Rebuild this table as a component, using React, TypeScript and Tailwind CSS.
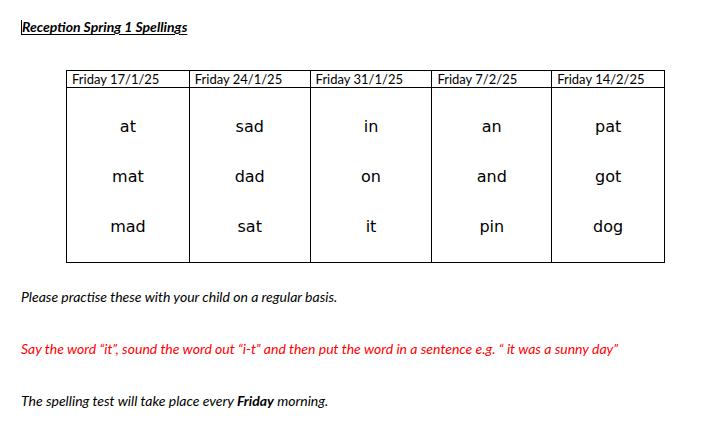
const columns = [
  { date: "Friday 17/1/25", words: ["at", "mat", "mad"], width: "w-[122px]" },
  { date: "Friday 24/1/25", words: ["sad", "dad", "sat"], width: "w-[121px]" },
  { date: "Friday 31/1/25", words: ["in", "on", "it"], width: "w-[122px]" },
  { date: "Friday 7/2/25", words: ["an", "and", "pin"], width: "w-[120px]" },
  { date: "Friday 14/2/25", words: ["pat", "got", "dog"], width: "w-[113px]" },
];

export default function App() {
  return (
    <div className="w-[726px] h-[431px] bg-white text-black overflow-hidden font-['Lato','Open_Sans',sans-serif]">
      {/* Title with the text cursor before it */}
      <div className="pt-[19px] pl-[21px] flex items-center">
        <span className="w-px h-[15px] bg-black" />
        <h1 className="text-[14px] leading-[16px] font-bold italic underline underline-offset-2">
          Reception Spring 1 Spellings
        </h1>
      </div>

      {/* Spellings table */}
      <div className="mt-[35px] ml-[66px] flex border border-black w-[599px]">
        {columns.map((col, i) => (
          <div
            key={col.date}
            className={`${col.width} flex flex-col ${i > 0 ? "border-l border-black" : ""}`}
          >
            <div className="h-[17px] border-b border-black pl-[5px] text-[13px] leading-[17px]">
              {col.date}
            </div>
            <div className="pt-[14px] pb-[10px] flex flex-col font-['Comic_Sans_MS','DejaVu_Sans',sans-serif]">
              {col.words.map((w) => (
                <div key={w} className="h-[50px] flex items-center justify-center text-[16px]">
                  {w}
                </div>
              ))}
            </div>
          </div>
        ))}
      </div>

      {/* Notes */}
      <div className="pl-[21px] pt-[26px] flex flex-col gap-[36px] text-[14px] leading-[16px] italic">
        <p>Please practise these with your child on a regular basis.</p>
        <p className="text-[#ff0000]">
          Say the word “it”, sound the word out “i-t” and then put the word in a sentence e.g. “ it was a sunny day”
        </p>
        <p>
          The spelling test will take place every <span className="font-bold">Friday</span> morning.
        </p>
      </div>
    </div>
  );
}
